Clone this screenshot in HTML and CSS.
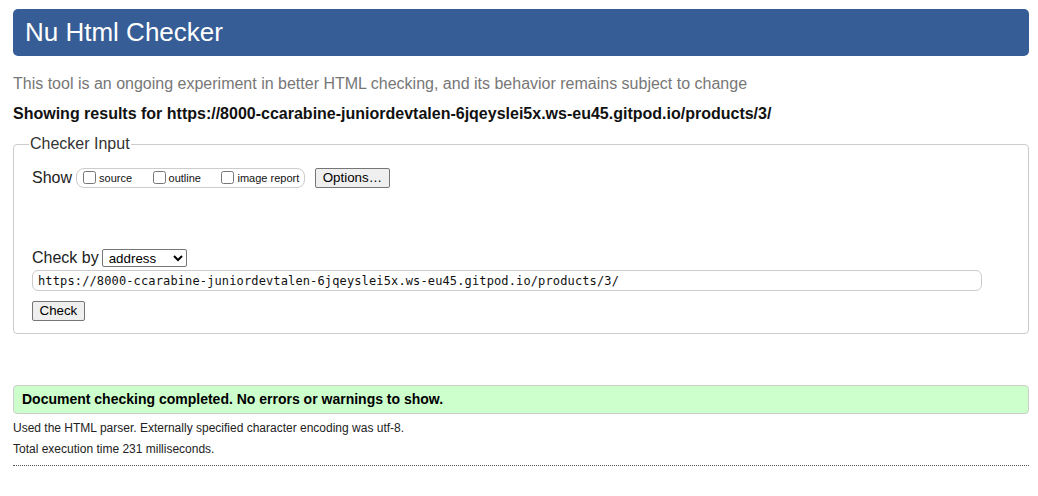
FILE: index.html
```html
<!DOCTYPE html>
<html lang="en">
<head>
<meta charset="utf-8">
<title>Nu Html Checker</title>
<link rel="stylesheet" href="styles.css">
</head>
<body>
<h1 class="title">Nu Html Checker</h1>
<p class="tagline">This tool is an ongoing experiment in better HTML checking, and its behavior remains subject to change</p>
<p class="showing">Showing results for https://8000-ccarabine-juniordevtalen-6jqeyslei5x.ws-eu45.gitpod.io/products/3/</p>
<form class="checker-form">
  <fieldset class="checker">
    <legend class="checker-legend">Checker Input</legend>
    <div class="show-row">
      <span class="row-label">Show</span>
      <fieldset class="show-group">
        <label class="opt"><input type="checkbox" class="cb">source</label>
        <label class="opt"><input type="checkbox" class="cb">outline</label>
        <label class="opt last"><input type="checkbox" class="cb">image report</label>
      </fieldset>
      <button type="button" class="btn options">Options…</button>
    </div>
    <div class="checkby-row">
      <span class="row-label">Check by</span>
      <select class="sel"><option>address</option></select>
    </div>
    <input class="url" type="text" value="https://8000-ccarabine-juniordevtalen-6jqeyslei5x.ws-eu45.gitpod.io/products/3/">
    <div class="submit-row"><button type="button" class="btn check">Check</button></div>
  </fieldset>
</form>
<div class="success">Document checking completed. No errors or warnings to show.</div>
<div class="details">
  <p class="detail">Used the HTML parser. Externally specified character encoding was utf-8.</p>
  <p class="detail">Total execution time 231 milliseconds.</p>
</div>
<div class="rule"></div>
</body>
</html>
```
FILE: styles.css
```css
html, body {
  background: #fff;
}
body {
  margin: 9px 9px 0 13px;
  font-family: "Liberation Sans", Arial, sans-serif;
  color: #000;
}
.title {
  margin: 0;
  height: 47px;
  line-height: 47px;
  padding-left: 12px;
  background: #365d95;
  color: #fff;
  font-size: 26px;
  font-weight: normal;
  border-radius: 5px;
}
.tagline {
  margin: 18px 0 0;
  font-size: 16px;
  line-height: 20px;
  color: #777;
}
.showing {
  margin: 10px 0 0;
  font-size: 16px;
  line-height: 20px;
  font-weight: bold;
  color: #111;
}
.checker-form {
  margin: 10px 0 0;
}
.checker {
  margin: 0;
  border: 1px solid #ccc;
  border-radius: 4px;
  padding: 13px 18px 12px;
  min-width: 0;
}
.checker-legend {
  font-size: 16px;
  line-height: 20px;
  padding: 0 1px;
  margin-left: -3px;
  color: #333;
}
.show-row {
  display: flex;
  align-items: center;
  height: 21px;
}
.row-label {
  font-size: 16px;
  line-height: 20px;
  color: #222;
}
.show-group {
  display: flex;
  align-items: center;
  margin: 0 0 0 4px;
  padding: 0 5px 0 2px;
  height: 18px;
  border: 1px solid #ccc;
  border-radius: 8px;
  min-width: 0;
}
.opt {
  display: flex;
  align-items: center;
  font-size: 11px;
  line-height: 13px;
  margin-right: 16.5px;
  color: #111;
  padding-top: 2px;
}
.opt.last {
  margin-right: 0;
}
.cb {
  margin: 0 3px 2px 4px;
  width: 13px;
  height: 13px;
}
.btn {
  font-family: "Liberation Sans", Arial, sans-serif;
  font-size: 13.33px;
  line-height: 16px;
  padding: 1px 6.5px;
  border: 1px solid #767676;
  border-radius: 2px;
  background: #efefef;
  color: #000;
}
.options {
  margin-left: 10px;
  height: 20px;
  padding: 0 6.5px;
}
.checkby-row {
  display: flex;
  align-items: center;
  height: 20px;
  margin-top: 60px;
}
.sel {
  margin-left: 3px;
  width: 85px;
  height: 18px;
  font-family: "Liberation Sans", Arial, sans-serif;
  font-size: 13.33px;
  padding: 0 0 0 2px;
  border: 1px solid #767676;
  border-radius: 2px;
  background: #fff;
  color: #000;
}
.url {
  display: block;
  box-sizing: border-box;
  margin: 2px 0 0;
  width: 950px;
  height: 21px;
  padding: 0 5px;
  border: 1px solid #ccc;
  border-radius: 6px;
  font-family: "DejaVu Sans Mono", "Liberation Mono", monospace;
  font-size: 12px;
  letter-spacing: 0.13px;
  color: #111;
}
.submit-row {
  margin-top: 10px;
  display: flex;
}
.check {
  height: 20px;
  padding: 0 6.5px;
}
.success {
  margin-top: 51px;
  padding: 6px 8px;
  line-height: 15px;
  font-size: 14px;
  font-weight: bold;
  background: #ccffcc;
  border: 1px solid #ccc;
  border-radius: 4px;
  color: #000;
}
.details {
  margin-top: 4px;
}
.detail {
  margin: 0;
  font-size: 12px;
  line-height: 21px;
  color: #222;
}
.rule {
  margin-top: 5px;
  border-top: 1px dotted #555;
}
```
